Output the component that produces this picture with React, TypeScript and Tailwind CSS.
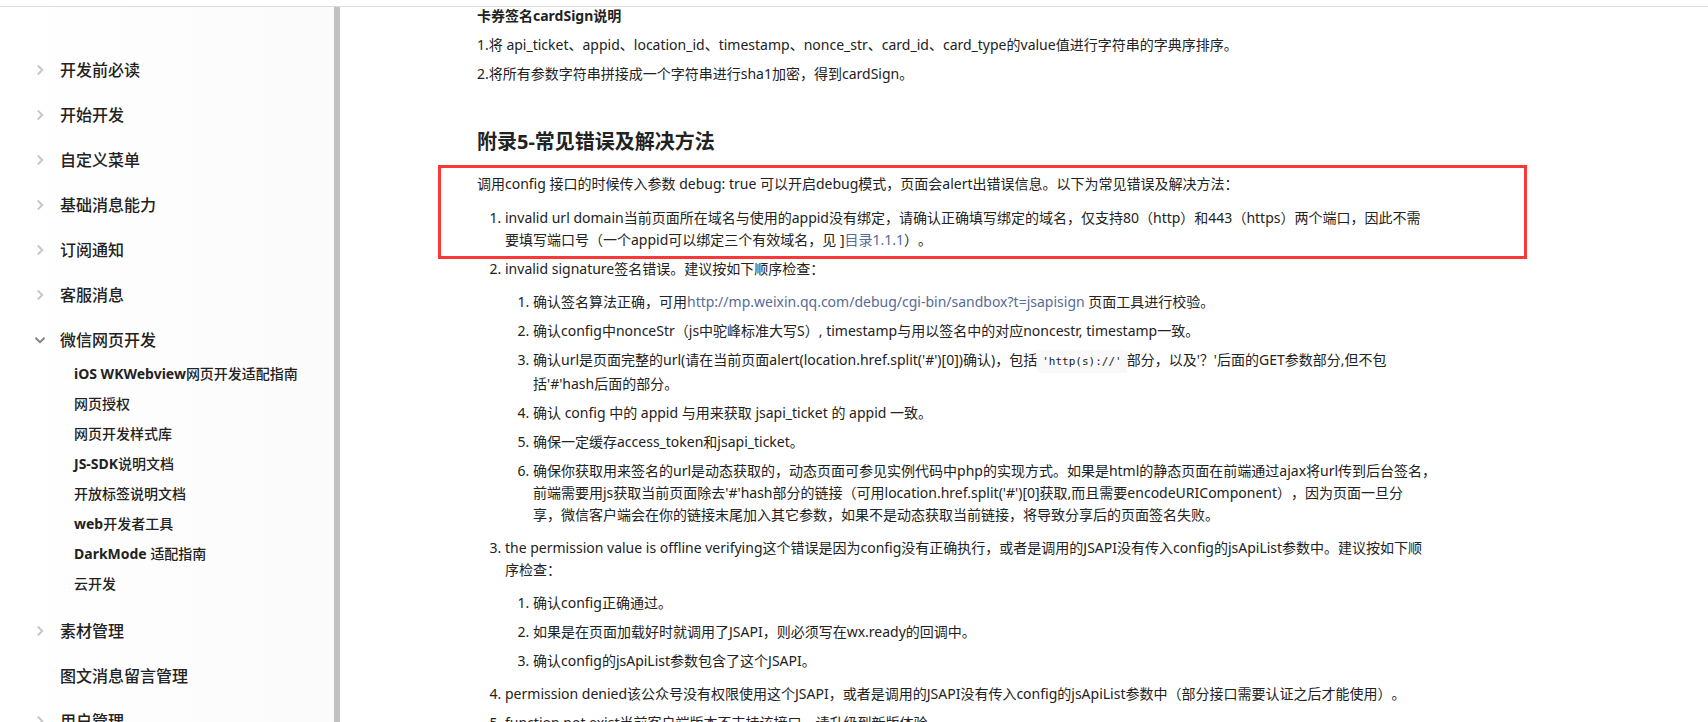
import { ReactNode } from 'react'
import clsx from 'clsx'

interface NavEntry {
  label: string
  open?: boolean
  leaf?: boolean
  children?: string[]
}

const NAV: NavEntry[] = [
  { label: '开发前必读' },
  { label: '开始开发' },
  { label: '自定义菜单' },
  { label: '基础消息能力' },
  { label: '订阅通知' },
  { label: '客服消息' },
  {
    label: '微信网页开发',
    open: true,
    children: [
      'iOS WKWebview网页开发适配指南',
      '网页授权',
      '网页开发样式库',
      'JS-SDK说明文档',
      '开放标签说明文档',
      'web开发者工具',
      'DarkMode 适配指南',
      '云开发',
    ],
  },
  { label: '素材管理' },
  { label: '图文消息留言管理', leaf: true },
  { label: '用户管理' },
]

function Arrow({ open }: { open?: boolean }) {
  return (
    <svg
      viewBox="0 0 10 10"
      className={clsx('size-[10px]', open ? 'rotate-90 text-[#858585]' : 'text-[#c8c8c8]')}
      fill="none"
      stroke="currentColor"
      strokeWidth="2"
    >
      <path d="M2.8 0.5 L7.2 5 L2.8 9.5" />
    </svg>
  )
}

// Latin words in the menu are set heavier than the Chinese around them
function NavLabel({ text }: { text: string }) {
  const [, latin, rest] = text.match(/^([\x20-\x7e]*)(.*)$/)!
  return (
    <span className="whitespace-pre">
      {latin && <span className="font-bold">{latin}</span>}
      {rest}
    </span>
  )
}

function NavItem({ entry }: { entry: NavEntry }) {
  return (
    <li>
      <a href="#" className="flex h-[45px] items-center text-[16px]">
        <span className="flex w-[25px] justify-start">{!entry.leaf && <Arrow open={entry.open} />}</span>
        {entry.label}
      </a>
      {entry.children && (
        <ul className="-mt-1 mb-[10px] pl-[39px]">
          {entry.children.map((child) => (
            <li key={child}>
              <a href="#" className="flex h-[30px] items-center text-[14px]">
                <NavLabel text={child} />
              </a>
            </li>
          ))}
        </ul>
      )}
    </li>
  )
}

function Sidebar() {
  return (
    <aside className="w-[340px] shrink-0 overflow-hidden border-r-[6px] border-[#c1c1c1] bg-linear-to-r from-white to-[#fbfbfb]">
      <ul className="pt-[40px] pl-[35px] font-medium">
        {NAV.map((entry) => (
          <NavItem key={entry.label} entry={entry} />
        ))}
      </ul>
    </aside>
  )
}

function OrderedList({ children }: { children: ReactNode }) {
  return <ol className="my-[11px] list-decimal space-y-[7px] pl-[28px]">{children}</ol>
}

function Link({ children }: { children: ReactNode }) {
  return (
    <a href="#" className="text-[#576b95]">
      {children}
    </a>
  )
}

export default function App() {
  return (
    <div className="flex h-screen flex-col overflow-hidden bg-white font-['Noto_Sans','Noto_Sans_CJK_SC',sans-serif] text-[#222] [text-spacing-trim:space-all]">
      <header className="h-[7px] shrink-0 border-b border-[#dcdcdc]" />
      <div className="flex min-h-0 flex-1">
        <Sidebar />
        <main className="min-w-0 flex-1 overflow-hidden pl-[137px]">
          <article className="max-w-[960px] text-[14px] leading-[22px]">
            <p className="mt-[-2px] font-bold">卡券签名cardSign说明</p>
            <p className="mt-[7px]">
              1.将 api_ticket、appid、location_id、timestamp、nonce_str、card_id、card_type的value值进行字符串的字典序排序。
            </p>
            <p className="mt-[7px]">2.将所有参数字符串拼接成一个字符串进行sha1加密，得到cardSign。</p>

            <section className="relative mt-[43px]">
              <h2 className="text-[20px] leading-[28px] font-bold">附录5-常见错误及解决方法</h2>
              <div className="pointer-events-none absolute top-[37px] right-[-90px] left-[-39px] h-[94px] border-[3px] border-[#fb3838]" />
              <p className="mt-[17px] mb-[12px]">
                调用config 接口的时候传入参数 debug: true 可以开启debug模式，页面会alert出错误信息。以下为常见错误及解决方法：
              </p>
              <OrderedList>
                <li>
                  invalid url domain当前页面所在域名与使用的appid没有绑定，请确认正确填写绑定的域名，仅支持80（http）和443（https）两个端口，因此不需
                  <br />
                  要填写端口号（一个appid可以绑定三个有效域名，见 ]<Link>目录1.1.1</Link>）。
                </li>
                <li>
                  invalid signature签名错误。建议按如下顺序检查：
                  <OrderedList>
                    <li>
                      确认签名算法正确，可用<Link>http://mp.weixin.qq.com/debug/cgi-bin/sandbox?t=jsapisign</Link> 页面工具进行校验。
                    </li>
                    <li>确认config中nonceStr（js中驼峰标准大写S）, timestamp与用以签名中的对应noncestr, timestamp一致。</li>
                    <li>
                      确认url是页面完整的url(请在当前页面alert(location.href.split('#')[0])确认)，包括
                      <code className="rounded-[2px] bg-[#f9f9f9] px-[5px] py-[5px] font-['DejaVu_Sans_Mono',monospace] text-[11px]">
                        'http(s)://'
                      </code>
                      部分，以及'？'后面的GET参数部分,但不包括'#'hash后面的部分。
                    </li>
                    <li>确认 config 中的 appid 与用来获取 jsapi_ticket 的 appid 一致。</li>
                    <li>确保一定缓存access_token和jsapi_ticket。</li>
                    <li>
                      确保你获取用来签名的url是动态获取的，动态页面可参见实例代码中php的实现方式。如果是html的静态页面在前端通过ajax将url传到后台签名，前端需要用js获取当前页面除去'#'hash部分的链接（可用location.href.split('#')[0]获取,而且需要encodeURIComponent），因为页面一旦分
                      <br />
                      享，微信客户端会在你的链接末尾加入其它参数，如果不是动态获取当前链接，将导致分享后的页面签名失败。
                    </li>
                  </OrderedList>
                </li>
                <li>
                  the permission value is offline verifying这个错误是因为config没有正确执行，或者是调用的JSAPI没有传入config的jsApiList参数中。建议按如下顺
                  <br />
                  序检查：
                  <OrderedList>
                    <li>确认config正确通过。</li>
                    <li>如果是在页面加载好时就调用了JSAPI，则必须写在wx.ready的回调中。</li>
                    <li>确认config的jsApiList参数包含了这个JSAPI。</li>
                  </OrderedList>
                </li>
                <li>
                  permission denied该公众号没有权限使用这个JSAPI，或者是调用的JSAPI没有传入config的jsApiList参数中（部分接口需要认证之后才能使用）。
                </li>
                <li>function not exist当前客户端版本不支持该接口，请升级到新版体验。</li>
              </OrderedList>
            </section>
          </article>
        </main>
      </div>
    </div>
  )
}
